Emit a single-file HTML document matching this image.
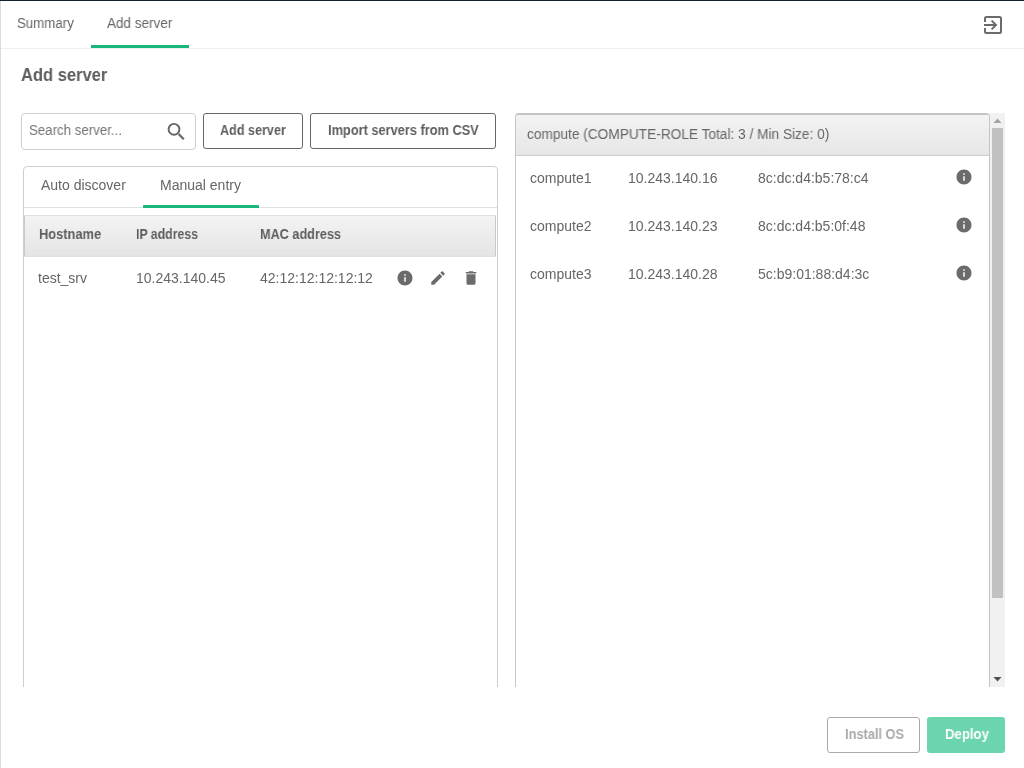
<!DOCTYPE html>
<html><head><meta charset="utf-8">
<style>
html,body{margin:0;padding:0;}
body{width:1024px;height:768px;position:relative;overflow:hidden;background:#fff;font-family:"Liberation Sans",sans-serif;font-size:14px;color:#666;}
.a{position:absolute;}
.t{position:absolute;white-space:nowrap;line-height:16px;height:16px;will-change:transform;}
.b{font-weight:bold;transform-origin:0 0;}
svg{position:absolute;display:block;}
</style></head>
<body>
<!-- frame lines -->
<div class="a" style="left:0;top:0;width:1024px;height:1px;background:#17212b"></div>
<div class="a" style="left:0;top:1px;width:1px;height:767px;background:#dadada"></div>

<!-- top tabs -->
<div class="a" style="left:1px;top:48px;width:1023px;height:1px;background:#eceef0"></div>
<div class="t" style="left:17px;top:15px;transform:scaleX(0.947);transform-origin:0 0">Summary</div>
<div class="t" style="left:107px;top:15px;transform:scaleX(0.965);transform-origin:0 0">Add server</div>
<div class="a" style="left:91px;top:45px;width:98px;height:3px;background:#1ab77d"></div>

<!-- logout icon -->
<svg style="left:984px;top:16px" width="18" height="18" viewBox="0 0 18 18">
<path d="M1 6V2.5Q1 1 2.5 1H15.5Q17 1 17 2.5V15.5Q17 17 15.5 17H2.5Q1 17 1 15.5V12" fill="none" stroke="#6b6b6b" stroke-width="2"/>
<path d="M0 9H12.5M7.6 4.6L12 9L7.6 13.4" fill="none" stroke="#6b6b6b" stroke-width="2"/>
</svg>

<!-- title -->
<div class="t b" style="left:21px;top:65px;font-size:19px;line-height:20px;height:20px;color:#5e5e5e;transform:scaleX(0.87)">Add server</div>

<!-- search -->
<div class="a" style="left:21px;top:113px;width:173px;height:35px;border:1px solid #cfcfcf;border-radius:4px;"></div>
<div class="t" style="left:29px;top:122px;color:#757575;transform:scaleX(0.948);transform-origin:0 0">Search server...</div>
<svg style="left:164px;top:120px" width="24" height="24" viewBox="0 0 24 24">
<circle cx="10" cy="9.3" r="5.4" fill="none" stroke="#666" stroke-width="1.9"/>
<path d="M14.6 14L19.8 19.2" stroke="#666" stroke-width="2.2" fill="none"/>
</svg>

<!-- buttons -->
<div class="a" style="left:203px;top:113px;width:98px;height:34px;border:1px solid #666;border-radius:3px;"></div>
<div class="t b" style="left:220px;top:122px;color:#5e5e5e;transform:scaleX(0.9)">Add server</div>
<div class="a" style="left:310px;top:113px;width:184px;height:34px;border:1px solid #666;border-radius:3px;"></div>
<div class="t b" style="left:328px;top:122px;color:#5e5e5e;transform:scaleX(0.914)">Import servers from CSV</div>

<!-- left panel -->
<div class="a" style="left:23px;top:166px;width:473px;height:530px;border:1px solid #cfcfcf;border-radius:4px;"></div>
<div class="a" style="left:1px;top:687px;width:1023px;height:81px;background:#fff"></div>
<div class="t" style="left:41px;top:177px;">Auto discover</div>
<div class="t" style="left:160px;top:177px;">Manual entry</div>
<div class="a" style="left:24px;top:207px;width:473px;height:1px;background:#dde2e6"></div>
<div class="a" style="left:143px;top:205px;width:116px;height:3px;background:#1ab77d;border-radius:1px 1px 0 0"></div>

<div class="a" style="left:24px;top:215px;width:470px;height:39px;border-top:1px solid #dde2e6;border-bottom:2px solid #dde2e6;border-left:1px solid #c9c9c9;border-right:1px solid #c9c9c9;background:linear-gradient(#f3f3f3,#e5e5e5);"></div>
<div class="t b" style="left:38.5px;top:225.5px;font-size:15px;color:#5e5e5e;transform:scaleX(0.857)">Hostname</div>
<div class="t b" style="left:135.5px;top:225.5px;font-size:15px;color:#5e5e5e;transform:scaleX(0.82)">IP address</div>
<div class="t b" style="left:259.5px;top:225.5px;font-size:15px;color:#5e5e5e;transform:scaleX(0.845)">MAC address</div>

<div class="t" style="left:38px;top:270px;">test_srv</div>
<div class="t" style="left:136px;top:270px;">10.243.140.45</div>
<div class="t" style="left:260px;top:270px;">42:12:12:12:12:12</div>
<svg style="left:396px;top:269px" width="18" height="18" viewBox="0 0 24 24"><path fill="#6b6b6b" d="M12 2C6.48 2 2 6.480 2 12s4.48 10 10 10 10-4.48 10-10S17.52 2 12 2zm1 15h-2v-6h2v6zm0-8h-2V7h2v2z"/></svg>
<svg style="left:429px;top:269px" width="18" height="18" viewBox="0 0 24 24"><path fill="#6b6b6b" d="M3 17.250V21h3.75L17.81 9.94l-3.75-3.75L3 17.25zM20.71 7.04c.39-.39.39-1.02 0-1.41l-2.34-2.34c-.39-.39-1.02-.39-1.41 0l-1.83 1.83 3.75 3.75 1.83-1.83z"/></svg>
<svg style="left:462px;top:269px" width="18" height="18" viewBox="0 0 24 24"><path fill="#6b6b6b" d="M6 19c0 1.1.9 2 2 2h8c1.1 0 2-.9 2-2V7H6v12zM19 4h-3.5l-1-1h-5l-1 1H5v2h14V4z"/></svg>

<!-- right panel -->
<div class="a" style="left:515px;top:113px;width:473px;height:600px;border:1px solid #c6c6c6;border-top:2px solid #c4c4c4;border-radius:4px 4px 0 0;"></div>
<div class="a" style="left:516px;top:115px;width:473px;height:40px;border-bottom:1px solid #cccccc;background:linear-gradient(#f3f3f3,#e6e6e6);border-radius:2px 2px 0 0"></div>
<div class="t" style="left:526.5px;top:126px;transform:scaleX(0.977);transform-origin:0 0">compute (COMPUTE-ROLE Total: 3 / Min Size: 0)</div>

<div class="t" style="left:530px;top:170px;">compute1</div>
<div class="t" style="left:628px;top:170px;">10.243.140.16</div>
<div class="t" style="left:758px;top:170px;">8c:dc:d4:b5:78:c4</div>
<svg style="left:955px;top:168px" width="18" height="18" viewBox="0 0 24 24"><path fill="#6b6b6b" d="M12 2C6.48 2 2 6.480 2 12s4.48 10 10 10 10-4.48 10-10S17.52 2 12 2zm1 15h-2v-6h2v6zm0-8h-2V7h2v2z"/></svg>

<div class="t" style="left:530px;top:218px;">compute2</div>
<div class="t" style="left:628px;top:218px;">10.243.140.23</div>
<div class="t" style="left:758px;top:218px;">8c:dc:d4:b5:0f:48</div>
<svg style="left:955px;top:216px" width="18" height="18" viewBox="0 0 24 24"><path fill="#6b6b6b" d="M12 2C6.48 2 2 6.480 2 12s4.48 10 10 10 10-4.48 10-10S17.52 2 12 2zm1 15h-2v-6h2v6zm0-8h-2V7h2v2z"/></svg>

<div class="t" style="left:530px;top:266px;">compute3</div>
<div class="t" style="left:628px;top:266px;">10.243.140.28</div>
<div class="t" style="left:758px;top:266px;">5c:b9:01:88:d4:3c</div>
<svg style="left:955px;top:264px" width="18" height="18" viewBox="0 0 24 24"><path fill="#6b6b6b" d="M12 2C6.48 2 2 6.480 2 12s4.48 10 10 10 10-4.48 10-10S17.52 2 12 2zm1 15h-2v-6h2v6zm0-8h-2V7h2v2z"/></svg>

<div class="a" style="left:500px;top:687px;width:524px;height:81px;background:#fff"></div>

<!-- scrollbar -->
<div class="a" style="left:990px;top:113px;width:15px;height:574px;background:#f1f1f1"></div>
<div class="a" style="left:992px;top:128px;width:11px;height:470px;background:#c1c1c1"></div>
<svg style="left:990px;top:113px" width="15" height="15" viewBox="0 0 15 15"><path d="M3.5 10H11.5L7.5 5.5Z" fill="#a3a3a3"/></svg>
<svg style="left:990px;top:672px" width="15" height="15" viewBox="0 0 15 15"><path d="M3.5 5H11.5L7.5 9.5Z" fill="#505050"/></svg>

<!-- bottom buttons -->
<div class="a" style="left:827px;top:717px;width:91px;height:34px;border:1px solid #aaa;border-radius:3px;"></div>
<div class="t b" style="left:845px;top:726px;color:#aaa;transform:scaleX(0.914)">Install OS</div>
<div class="a" style="left:927px;top:717px;width:78px;height:36px;background:#6bd5ae;border-radius:3px;"></div>
<div class="t b" style="left:945px;top:726px;color:#fff;transform:scaleX(0.94)">Deploy</div>
</body></html>
